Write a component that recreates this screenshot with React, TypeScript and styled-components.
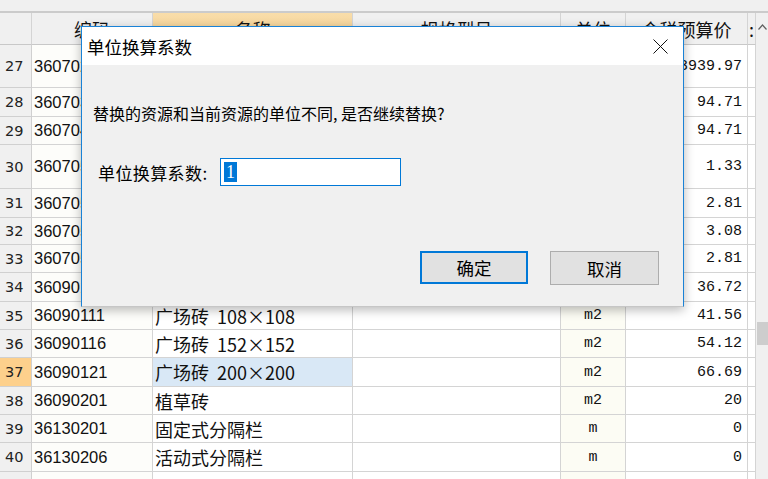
import React from 'react';
import styled, { createGlobalStyle } from 'styled-components';

const GlobalStyle = createGlobalStyle`
  html, body {
    margin: 0;
    padding: 0;
    background: #f0f0f0;
    overflow: hidden;
  }
  * {
    box-sizing: border-box;
  }
`;

const CJK = `"Noto Sans CJK SC", "Noto Sans", sans-serif`;

type RowData = {
  n?: number;
  code?: string;
  name?: string;
  unit?: string;
  price?: string;
  h: number;
  active?: boolean;
};

const rows: RowData[] = [
  { n: 27, code: '36070201', price: '3939.97', h: 43 },
  { n: 28, code: '36070301', price: '94.71', h: 29 },
  { n: 29, code: '36070401', price: '94.71', h: 28 },
  { n: 30, code: '36070501', price: '1.33', h: 44 },
  { n: 31, code: '36070502', price: '2.81', h: 29 },
  { n: 32, code: '36070503', price: '3.08', h: 27 },
  { n: 33, code: '36070504', price: '2.81', h: 28 },
  { n: 34, code: '36090101', price: '36.72', h: 29 },
  { n: 35, code: '36090111', name: '广场砖  108×108', unit: 'm2', price: '41.56', h: 28 },
  { n: 36, code: '36090116', name: '广场砖  152×152', unit: 'm2', price: '54.12', h: 28 },
  { n: 37, code: '36090121', name: '广场砖  200×200', unit: 'm2', price: '66.69', h: 29, active: true },
  { n: 38, code: '36090201', name: '植草砖', unit: 'm2', price: '20', h: 28 },
  { n: 39, code: '36130201', name: '固定式分隔栏', unit: 'm', price: '0', h: 28 },
  { n: 40, code: '36130206', name: '活动式分隔栏', unit: 'm', price: '0', h: 29 },
  { h: 30 },
];

const Page = styled.div`
  position: relative;
  width: 768px;
  height: 479px;
  overflow: hidden;
  background: #f0f0f0;
`;

const TopStrip = styled.div`
  height: 13px;
  background: #f0f0f0;
  border-bottom: 2px solid #cbcbcb;
`;

const Main = styled.div`
  display: flex;
`;

const Sheet = styled.div`
  width: 756px;
  display: flex;
  flex-direction: column;
`;

const Row = styled.div<{ $h: number }>`
  display: grid;
  grid-template-columns: 32px 121px 200px 208px 65px 122px 8px;
  height: ${(p) => p.$h}px;
  flex-shrink: 0;
`;

const HeadCell = styled.div<{ $hot?: boolean }>`
  display: flex;
  align-items: center;
  justify-content: center;
  overflow: hidden;
  white-space: nowrap;
  border-right: 1px solid #d4d4d4;
  border-bottom: 1px solid #c8c8c8;
  background: ${(p) => (p.$hot ? 'linear-gradient(#f9ddaa, #f2cd8c)' : '#f0f0f0')};
  font-family: ${CJK};
  font-size: 18px;
  color: #111;
`;

const NumCell = styled.div<{ $hot?: boolean }>`
  display: flex;
  align-items: center;
  padding-left: 5px;
  border-right: 1px solid #d0d0d0;
  border-bottom: 1px solid #d0d0d0;
  background: ${(p) => (p.$hot ? '#fdd08c' : '#f0f0f0')};
  font-family: 'DejaVu Sans', sans-serif;
  font-size: 14.5px;
  color: #222;
`;

const Cell = styled.div<{ $bg?: string; $align?: 'left' | 'center' | 'right'; $mono?: boolean; $cjk?: boolean }>`
  display: flex;
  align-items: center;
  justify-content: ${(p) => (p.$align === 'right' ? 'flex-end' : p.$align === 'center' ? 'center' : 'flex-start')};
  padding: ${(p) => (p.$align === 'right' ? '0 5px 0 0' : p.$align === 'center' ? '0' : '0 0 0 2px')};
  overflow: hidden;
  white-space: pre;
  border-right: 1px solid #d4d4d4;
  border-bottom: 1px solid #d4d4d4;
  background: ${(p) => p.$bg || '#fff'};
  font-family: ${(p) =>
    p.$mono ? `'Liberation Mono', monospace` : p.$cjk ? CJK : `'Liberation Sans', Arial, sans-serif`};
  font-size: ${(p) => (p.$mono ? '15px' : p.$cjk ? '18px' : '16.5px')};
  color: #111;
`;

const ScrollTrack = styled.div`
  position: relative;
  width: 12px;
  height: 466px;
  background: #f0f0f0;
`;

const ScrollArrow = styled.div`
  display: flex;
  justify-content: center;
  padding-top: 11px;
`;

const Thumb = styled.div`
  position: absolute;
  left: 1px;
  right: 0;
  top: 309px;
  height: 23px;
  background: #cdcdcd;
`;

const Dialog = styled.div`
  position: absolute;
  left: 81px;
  top: 26px;
  width: 603px;
  height: 281px;
  display: flex;
  flex-direction: column;
  border: 1px solid #1a82d6;
  border-bottom-color: #c6c6c6;
  background: #f0f0f0;
  box-shadow: 0 3px 10px rgba(0, 0, 0, 0.28);
`;

const TitleBar = styled.div`
  height: 38px;
  display: flex;
  align-items: center;
  justify-content: space-between;
  padding-left: 5px;
  background: #fff;
  font-family: ${CJK};
  font-size: 17.5px;
  color: #000;
`;

const CloseButton = styled.div`
  width: 46px;
  height: 38px;
  display: flex;
  align-items: center;
  justify-content: center;
`;

const Body = styled.div`
  flex: 1;
  display: flex;
  flex-direction: column;
  font-family: ${CJK};
  color: #000;
`;

const Message = styled.div`
  margin-top: 36px;
  padding-left: 11px;
  line-height: 24px;
  font-size: 16px;
`;

const FieldRow = styled.div`
  margin-top: 33px;
  padding-left: 16px;
  display: flex;
  align-items: center;
`;

const FieldLabel = styled.span`
  width: 122px;
  font-size: 17px;
  letter-spacing: 0.4px;
`;

const TextBox = styled.div`
  width: 181px;
  height: 28px;
  display: flex;
  align-items: center;
  padding-left: 3px;
  border: 1px solid #0078d7;
  background: #fff;
`;

const Selected = styled.span`
  display: inline-block;
  width: 13px;
  height: 20px;
  line-height: 20px;
  text-align: center;
  background: #0078d7;
  color: #fff;
  font-family: 'Liberation Serif', serif;
  font-size: 18px;
`;

const Buttons = styled.div`
  margin-top: 65px;
  padding-right: 24px;
  display: flex;
  justify-content: flex-end;
  gap: 22px;
`;

const Button = styled.div<{ $primary?: boolean }>`
  width: ${(p) => (p.$primary ? 108 : 109)}px;
  height: ${(p) => (p.$primary ? 33 : 34)}px;
  display: flex;
  align-items: center;
  justify-content: center;
  background: #e1e1e1;
  border: ${(p) => (p.$primary ? '2px solid #0078d7' : '1px solid #adadad')};
  font-size: 17.5px;
  color: #000;
`;

const App = () => {
  return (
    <Page>
      <GlobalStyle />
      <TopStrip />
      <Main>
        <Sheet>
          <Row $h={32}>
            <HeadCell />
            <HeadCell>编码</HeadCell>
            <HeadCell $hot>名称</HeadCell>
            <HeadCell>规格型号</HeadCell>
            <HeadCell>单位</HeadCell>
            <HeadCell>含税预算价</HeadCell>
            <HeadCell>:</HeadCell>
          </Row>
          {rows.map((r, i) => (
            <Row $h={r.h} key={i}>
              <NumCell $hot={r.active}>{r.n}</NumCell>
              <Cell $bg="#fdfdfa">{r.code}</Cell>
              <Cell $cjk $bg={r.active ? '#d9e8f6' : '#fff'}>
                {r.name}
              </Cell>
              <Cell />
              <Cell $mono $align="center" $bg="#fcfcf4">
                {r.unit}
              </Cell>
              <Cell $mono $align="right">
                {r.price}
              </Cell>
              <Cell />
            </Row>
          ))}
        </Sheet>
        <ScrollTrack>
          <ScrollArrow>
            <svg width="9" height="6" viewBox="0 0 9 6">
              <path d="M0.5 5.5 L4.5 1 L8.5 5.5" fill="none" stroke="#606060" strokeWidth="1.2" />
            </svg>
          </ScrollArrow>
          <Thumb />
        </ScrollTrack>
      </Main>

      <Dialog>
        <TitleBar>
          <span>单位换算系数</span>
          <CloseButton>
            <svg width="15" height="15" viewBox="0 0 15 15">
              <path d="M0.5 0.5 L14.5 14.5 M14.5 0.5 L0.5 14.5" stroke="#111" strokeWidth="1" />
            </svg>
          </CloseButton>
        </TitleBar>
        <Body>
          <Message>替换的资源和当前资源的单位不同, 是否继续替换?</Message>
          <FieldRow>
            <FieldLabel>单位换算系数:</FieldLabel>
            <TextBox>
              <Selected>1</Selected>
            </TextBox>
          </FieldRow>
          <Buttons>
            <Button $primary>确定</Button>
            <Button>取消</Button>
          </Buttons>
        </Body>
      </Dialog>
    </Page>
  );
};

export default App;
